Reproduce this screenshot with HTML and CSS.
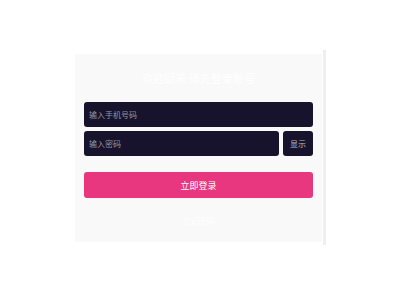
FILE: index.html
```
<!DOCTYPE html>
<html lang="zh">
<head>
<meta charset="utf-8">
<link rel="stylesheet" href="styles.css">
</head>
<body>
<div class="page">
  <div class="card">
    <div class="title">欢迎回来 请先登录账号</div>
    <div class="field">
      <input class="input" type="text" placeholder="输入手机号码">
    </div>
    <div class="row">
      <input class="input grow" type="password" placeholder="输入密码">
      <button class="show">显示</button>
    </div>
    <button class="login">立即登录</button>
    <div class="footer">忘记密码</div>
  </div>
  <div class="strip"></div>
</div>
</body>
</html>
```
FILE: styles.css
```
html, body {
  margin: 0;
  padding: 0;
  background: #ffffff;
  font-family: "Noto Sans CJK SC", "Noto Sans", sans-serif;
}
.page {
  display: flex;
  align-items: flex-start;
  gap: 1px;
  padding: 50px 0 0 75px;
}
.card {
  width: 247px;
  box-sizing: border-box;
  margin-top: 4px;
  padding: 16px 9px 14px;
  background: #f9f9f9;
  display: flex;
  flex-direction: column;
}
.title {
  height: 16px;
  line-height: 16px;
  font-size: 11px;
  color: #ffffff;
  text-align: center;
  margin-bottom: 16px;
}
.field {
  display: flex;
}
.input {
  display: block;
  width: 100%;
  height: 25px;
  box-sizing: border-box;
  border: none;
  border-radius: 3px;
  background: #17132c;
  color: #ffffff;
  padding: 0 5px;
  font-family: inherit;
  font-size: 8px;
  outline: none;
}
.input::placeholder {
  color: #9896a3;
}
.row {
  display: flex;
  gap: 4px;
  margin-top: 4px;
}
.grow {
  flex: 1;
  width: auto;
  min-width: 0;
}
.show {
  width: 30px;
  height: 25px;
  border: none;
  border-radius: 3px;
  background: #17132c;
  color: #b9b7c2;
  font-family: inherit;
  font-size: 8px;
  padding: 0;
}
.login {
  margin-top: 16px;
  height: 26px;
  border: none;
  border-radius: 3px;
  background: #e8367f;
  color: #ffffff;
  font-family: inherit;
  font-size: 9px;
  padding: 0;
}
.footer {
  margin-top: 16px;
  height: 14px;
  line-height: 14px;
  font-size: 8px;
  color: #ffffff;
  text-align: center;
}
.strip {
  width: 3px;
  height: 195px;
  background: #efefef;
}
```
